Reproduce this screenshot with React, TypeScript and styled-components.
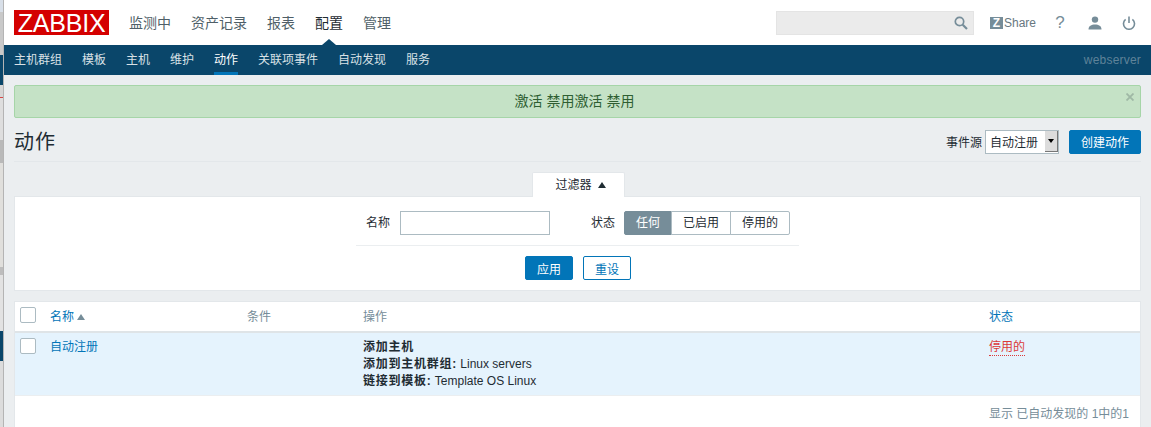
import React from "react";
import styled, { createGlobalStyle } from "styled-components";

const Global = createGlobalStyle`
  html, body { margin: 0; padding: 0; height: 427px; overflow: hidden; background: #ebeef0; }
  body { font-family: "Liberation Sans", "Noto Sans CJK SC", sans-serif; font-size: 12px; color: #1f2c33; }
  #root { height: 427px; }
`;

const Shell = styled.div`display: flex; height: 427px; overflow: hidden;`;

const BehindStrip = styled.div`
  width: 3px; flex: none; display: flex; flex-direction: column;
  border-right: 1px solid #b4b4b4; background: #dcdcdc;
`;
const BehindPiece = styled.div<{ $h: number; $c: string }>`height: ${p => p.$h}px; flex: none; background: ${p => p.$c};`;

const Page = styled.div`flex: 1; min-width: 0; display: flex; flex-direction: column;`;

const TopBar = styled.header`
  height: 45px; flex: none; background: #fff; display: flex; align-items: center; padding: 0 10px;
`;
const Logo = styled.div`
  width: 95px; height: 25px; background: #d40000; color: #fff; flex: none;
  font-size: 25px; line-height: 26px; text-align: center; letter-spacing: -0.2px; margin-top: -1px;
`;
const TopMenu = styled.nav`display: flex; gap: 20px; margin-left: 20px; height: 45px;`;
const TopItem = styled.a<{ $active?: boolean }>`
  position: relative; font-size: 14px; line-height: 47px; color: ${p => (p.$active ? "#1f2c33" : "#4f5f68")};
  ${p => p.$active && `
    &::after {
      content: ""; position: absolute; left: 50%; bottom: 0; margin-left: -7px;
      border: solid transparent; border-width: 0 7px 6px; border-bottom-color: #0a466a;
    }
  `}
`;
const TopRight = styled.div`margin-left: auto; display: flex; align-items: center; height: 45px;`;
const Search = styled.div`
  width: 198px; height: 24px; box-sizing: border-box; background: #ebebeb; border: 1px solid #e4e4e4;
  display: flex; align-items: center; justify-content: flex-end; padding-right: 4px;
`;
const ShareLink = styled.a`display: flex; align-items: center; margin-left: 16px; width: 49px; color: #68777f; font-size: 12px;`;
const ZBox = styled.span`
  width: 13px; height: 12px; background: #768d99; color: #fff; font-weight: 700; font-size: 12px;
  line-height: 12px; text-align: center; margin-right: 1px; flex: none;
`;
const IconSlot = styled.span`
  width: 34px; display: flex; justify-content: center; align-items: center; color: #768d99; font-size: 16px;
`;
const Help = styled(IconSlot)`margin-left: 10px; width: 24px; font-size: 17px; transform: translateX(-1px);`;
const UserSlot = styled(IconSlot)`margin-left: 10px; width: 24px;`;
const PowerSlot = styled(IconSlot)`margin-left: 10px; width: 24px;`;

const SubBar = styled.nav`
  height: 30px; flex: none; background: #0a466a; display: flex; gap: 20px; padding: 0 10px; position: relative;
`;
const SubItem = styled.a<{ $active?: boolean }>`
  line-height: 30px; height: 30px; box-sizing: border-box; color: ${p => (p.$active ? "#fff" : "#d9e1e6")};
  ${p => p.$active && `border-bottom: 3px solid #0275b8;`}
`;
const Server = styled.span`margin-left: auto; line-height: 30px; color: #5f8399; letter-spacing: 0.2px;`;

const Content = styled.main`flex: 1; padding: 10px 10px 0; min-height: 0; display: flex; flex-direction: column;`;

const Message = styled.div`
  height: 33px; box-sizing: border-box; background: #c5e2c6; border: 1px solid #a6d5a8; border-radius: 2px;
  color: #2f5f32; font-size: 14px; line-height: 31px; text-align: center; position: relative; flex: none;
  padding-right: 6px;
`;
const Close = styled.span`
  position: absolute; right: 6px; top: 7px; width: 8px; height: 8px; display: flex; color: #9fb8a5;
`;

const TitleRow = styled.div`
  height: 44px; flex: none; box-sizing: border-box; border-bottom: 1px solid #e3e7ea;
  display: flex; align-items: center; padding-top: 5px;
`;
const Title = styled.h1`margin: 0; font-size: 20px; font-weight: 400; letter-spacing: 1px; color: #1f2c33; line-height: 24px;`;
const TitleControls = styled.div`margin-left: auto; display: flex; align-items: center; margin-top: -1px;`;
const ControlLabel = styled.span`margin-right: 3px;`;
const SelectBox = styled.div`
  width: 74px; height: 24px; box-sizing: border-box; border: 1px solid #acbbc2; background: #fff;
  display: flex; align-items: center; padding: 0 0 0 4px; position: relative; color: #1f2c33;
`;
const SelectArrow = styled.span`
  margin-left: auto; width: 13px; height: 21px; background: #dcdcdc;
  border-right: 1px solid #777; border-bottom: 1px solid #777; box-sizing: border-box;
  display: flex; align-items: center; justify-content: center; margin-top: -1px;
  &::before { content: ""; border: solid transparent; border-width: 4px 3.5px 0; border-top-color: #000; }
`;
const Primary = styled.button`
  height: 24px; box-sizing: border-box; border: 1px solid #0275b8; background: #0275b8; color: #fff;
  border-radius: 2px; padding: 0; font: inherit; width: 72px; margin-left: 10px;
`;

const FilterTabRow = styled.div`display: flex; justify-content: center; margin: 10px 0 -1px; flex: none; position: relative; z-index: 1;`;
const FilterTab = styled.div`
  width: 93px; height: 25px; box-sizing: border-box; background: #fff; border: 1px solid #e3e7ea; border-bottom: 0;
  border-radius: 2px 2px 0 0; text-align: center; line-height: 24px; margin-left: 1px; padding-left: 5px;
`;
const Caret = styled.span`
  display: inline-block; margin-left: 6px; vertical-align: 1px;
  border: solid transparent; border-width: 0 4.5px 6px; border-bottom-color: #1f2c33;
`;
const FilterPanel = styled.section`
  height: 95px; flex: none; box-sizing: border-box; background: #fff; border: 1px solid #e3e7ea;
  display: flex; flex-direction: column; align-items: center; padding-top: 14px;
`;
const FilterInner = styled.div`width: 443px; display: flex; flex-direction: column; align-items: center;`;
const FilterRow = styled.div`
  width: 100%; box-sizing: border-box; height: 35px; border-bottom: 1px solid #ebeef0;
  display: flex; align-items: flex-start; padding-left: 10px; color: #1f2c33;
`;
const FieldLabel = styled.label`line-height: 24px; margin-right: 10px;`;
const TextInput = styled.input`
  width: 150px; height: 24px; box-sizing: border-box; border: 1px solid #acbbc2; background: #fff; padding: 0; margin: 0 41px 0 0;
`;
const Segments = styled.div`display: flex; margin-left: -1px;`;
const Segment = styled.span<{ $on?: boolean; $w: number }>`
  width: ${p => p.$w}px; height: 24px; box-sizing: border-box; text-align: center; line-height: 22px;
  border: 1px solid ${p => (p.$on ? "#768d99" : "#acbbc2")}; margin-left: -1px;
  background: ${p => (p.$on ? "#768d99" : "#fff")}; color: ${p => (p.$on ? "#fff" : "#1f2c33")};
  &:first-child { border-radius: 2px 0 0 2px; margin-left: 0; }
  &:last-child { border-radius: 0 2px 2px 0; }
`;
const ButtonRow = styled.div`display: flex; gap: 10px; margin-top: 10px; margin-left: 1px;`;
const SmallPrimary = styled(Primary)`width: 48px; margin-left: 0;`;
const Ghost = styled.button`
  width: 48px; height: 24px; box-sizing: border-box; border: 1px solid #0275b8; background: #fff; color: #0275b8;
  border-radius: 2px; padding: 0; font: inherit;
`;

const Table = styled.section`
  margin-top: 10px; flex: 1; background: #fff; border: 1px solid #e3e7ea; border-bottom: 0; display: flex; flex-direction: column;
`;
const columns = "35px 197px 116px 626px 1fr";
const HeadRow = styled.div`
  display: grid; grid-template-columns: ${columns}; height: 31px; box-sizing: border-box; padding-bottom: 3px;
  border-bottom: 2px solid #dfe4e7; align-items: center; color: #768d99; flex: none;
`;
const DataRow = styled.div`
  display: grid; grid-template-columns: ${columns}; height: 63px; box-sizing: border-box;
  background: #e5f3fd; border-bottom: 1px solid #ebeef0; padding-top: 5px; flex: none; line-height: 17px;
`;
const Check = styled.span`
  display: block; width: 16px; height: 16px; box-sizing: border-box; border: 1px solid #acbbc2; border-radius: 2px;
  background: #fff; margin-left: 5px;
`;
const SortLink = styled.a`color: #0275b8;`;
const RowLink = styled(SortLink)`padding-top: 1px;`;
const SortCaret = styled.span`
  display: inline-block; margin-left: 3px; vertical-align: 1px;
  border: solid transparent; border-width: 0 4px 6px; border-bottom-color: #768d99;
`;
const StatusCell = styled.div`padding-top: 1px;`;
const StatusOff = styled.a`
  color: #dc3a3a; border-bottom: 1px dotted #dc3a3a; line-height: 15px; display: inline-block;
`;
const Ops = styled.div`
  color: #1f2c33; padding-top: 1px;
  b { letter-spacing: 0.75px; }
`;
const Footer = styled.div`text-align: right; color: #768d99; padding: 11px 11px 0 0; line-height: 15px;`;

const behind: [number, string][] = [
  [12, "#d8dfe8"], [43, "#c9c9c9"], [30, "#0a466a"], [12, "#d6d6d6"], [1, "#d64545"], [42, "#dedede"],
  [23, "#b9b9b9"], [104, "#e0dfdc"], [8, "#bdbdbd"], [56, "#e2e2e2"], [30, "#0a466a"], [66, "#dcdcdc"],
];

export default function App() {
  return (
    <Shell>
      <Global />
      <BehindStrip>
        {behind.map(([h, c], i) => <BehindPiece key={i} $h={h} $c={c} />)}
      </BehindStrip>
      <Page>
        <TopBar>
          <Logo>ZABBIX</Logo>
          <TopMenu>
            <TopItem>监测中</TopItem>
            <TopItem>资产记录</TopItem>
            <TopItem>报表</TopItem>
            <TopItem $active>配置</TopItem>
            <TopItem>管理</TopItem>
          </TopMenu>
          <TopRight>
            <Search>
              <svg width="16" height="16" viewBox="0 0 16 16" fill="none" stroke="#768d99" strokeWidth="1.7">
                <circle cx="6.5" cy="6.5" r="4.2" />
                <path d="M9.7 9.7 14 14" strokeWidth="2.2" />
              </svg>
            </Search>
            <ShareLink><ZBox>Z</ZBox>Share</ShareLink>
            <Help>?</Help>
            <UserSlot>
              <svg width="14" height="14" viewBox="0 0 14 14" fill="#768d99">
                <circle cx="7" cy="3.6" r="3.2" />
                <path d="M0.5 13.5c0-3.6 2.8-5 6.5-5s6.5 1.4 6.5 5z" />
              </svg>
            </UserSlot>
            <PowerSlot>
              <svg width="14" height="14" viewBox="0 0 14 14" fill="none" stroke="#768d99" strokeWidth="1.6">
                <path d="M7 0.5v6.5" />
                <path d="M3.6 3.4a5.5 5.5 0 1 0 6.8 0" />
              </svg>
            </PowerSlot>
          </TopRight>
        </TopBar>
        <SubBar>
          <SubItem>主机群组</SubItem>
          <SubItem>模板</SubItem>
          <SubItem>主机</SubItem>
          <SubItem>维护</SubItem>
          <SubItem $active>动作</SubItem>
          <SubItem>关联项事件</SubItem>
          <SubItem>自动发现</SubItem>
          <SubItem>服务</SubItem>
          <Server>webserver</Server>
        </SubBar>
        <Content>
          <Message>
            激活 禁用激活 禁用
            <Close>
              <svg width="8" height="8" viewBox="0 0 8 8" stroke="currentColor" strokeWidth="1.8">
                <path d="M0.5 0.5l7 7M7.5 0.5l-7 7" />
              </svg>
            </Close>
          </Message>
          <TitleRow>
            <Title>动作</Title>
            <TitleControls>
              <ControlLabel>事件源</ControlLabel>
              <SelectBox>自动注册<SelectArrow /></SelectBox>
              <Primary>创建动作</Primary>
            </TitleControls>
          </TitleRow>
          <FilterTabRow>
            <FilterTab>过滤器<Caret /></FilterTab>
          </FilterTabRow>
          <FilterPanel>
            <FilterInner>
              <FilterRow>
                <FieldLabel>名称</FieldLabel>
                <TextInput />
                <FieldLabel>状态</FieldLabel>
                <Segments>
                  <Segment $on $w={48}>任何</Segment>
                  <Segment $w={60}>已启用</Segment>
                  <Segment $w={60}>停用的</Segment>
                </Segments>
              </FilterRow>
              <ButtonRow>
                <SmallPrimary>应用</SmallPrimary>
                <Ghost>重设</Ghost>
              </ButtonRow>
            </FilterInner>
          </FilterPanel>
          <Table>
            <HeadRow>
              <Check />
              <span><SortLink>名称</SortLink><SortCaret /></span>
              <span>条件</span>
              <span>操作</span>
              <SortLink>状态</SortLink>
            </HeadRow>
            <DataRow>
              <Check />
              <RowLink>自动注册</RowLink>
              <span />
              <Ops>
                <div><b>添加主机</b></div>
                <div><b>添加到主机群组:</b> Linux servers</div>
                <div><b>链接到模板:</b> Template OS Linux</div>
              </Ops>
              <StatusCell><StatusOff>停用的</StatusOff></StatusCell>
            </DataRow>
            <Footer>显示 已自动发现的 1中的1</Footer>
          </Table>
        </Content>
      </Page>
    </Shell>
  );
}
